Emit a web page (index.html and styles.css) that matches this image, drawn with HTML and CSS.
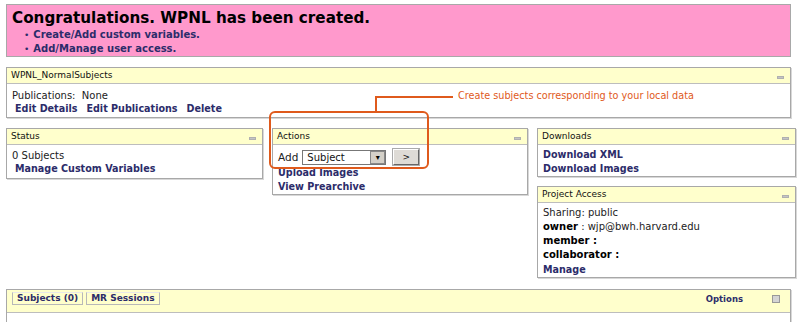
FILE: index.html
```html
<!DOCTYPE html>
<html lang="en">
<head>
  <meta charset="UTF-8">
  <title>WPNL</title>
  <link rel="stylesheet" href="styles.css">
</head>
<body>
  <div class="page">
    <div class="banner">
      <h1>Congratulations. WPNL has been created.</h1>
      <ul>
        <li><a href="#">Create/Add custom variables.</a></li>
        <li><a href="#">Add/Manage user access.</a></li>
      </ul>
    </div>

    <div class="box project">
      <div class="box-head">WPNL_NormalSubjects <span class="min"></span></div>
      <div class="box-body">
        <div class="pubs">Publications:&nbsp; None</div>
        <div class="links">
          <a href="#">Edit Details</a>
          <a href="#">Edit Publications</a>
          <a href="#">Delete</a>
        </div>
      </div>
    </div>

    <div class="row">
      <div class="col">
        <div class="box status">
          <div class="box-head">Status <span class="min"></span></div>
          <div class="box-body">
            <div>0 Subjects</div>
            <a class="link" href="#">Manage Custom Variables</a>
          </div>
        </div>
      </div>

      <div class="col">
        <div class="box actions">
          <div class="box-head">Actions <span class="min"></span></div>
          <div class="box-body">
            <div class="add-row">
              <span>Add</span>
              <span class="select">Subject<span class="arrow">&#9662;</span></span>
              <span class="go">&gt;</span>
            </div>
            <a class="link" href="#">Upload Images</a>
            <a class="link" href="#">View Prearchive</a>
          </div>
        </div>
      </div>

      <div class="col">
        <div class="box downloads">
          <div class="box-head">Downloads <span class="min"></span></div>
          <div class="box-body">
            <a class="link" href="#">Download XML</a>
            <a class="link" href="#">Download Images</a>
          </div>
        </div>
        <div class="box access">
          <div class="box-head">Project Access <span class="min"></span></div>
          <div class="box-body">
            <div>Sharing: public</div>
            <div><b>owner</b> : wjp@bwh.harvard.edu</div>
            <div><b>member :</b></div>
            <div><b>collaborator :</b></div>
            <a class="link manage" href="#">Manage</a>
          </div>
        </div>
      </div>
    </div>

    <div class="box data">
      <div class="data-head">
        <span class="tab">Subjects (0)</span>
        <span class="tab">MR Sessions</span>
        <span class="spacer"></span>
        <span class="options">Options</span>
        <span class="check"></span>
      </div>
      <div class="data-body"></div>
    </div>

    <div class="callout">
      <div class="callout-box"></div>
      <div class="callout-line"></div>
      <div class="callout-text">Create subjects corresponding to your local data</div>
    </div>
  </div>
</body>
</html>
```

FILE: styles.css
```css
* {
  box-sizing: border-box;
}

body {
  margin: 0;
  background: #fff;
  font-family: "DejaVu Sans", Verdana, sans-serif;
  font-size: 10px;
  color: #222;
}

a {
  color: #2c2c6a;
  font-weight: bold;
  font-size: 9.6px;
  text-decoration: none;
}

.page {
  position: relative;
  padding: 4px 9px 0 6px;
}

.banner {
  background: #ff99cc;
  border: 1px solid #a8a8a8;
  padding: 3px 5px 0;
  height: 53px;
}

.banner h1 {
  margin: 0;
  font-size: 15.2px;
  line-height: 20px;
  color: #000;
}

.banner ul {
  margin: 0;
  padding-left: 12px;
  list-style: none;
}

.banner li {
  line-height: 13px;
}

.banner li::before {
  content: "\2022";
  color: #2c2c6a;
  font-size: 9px;
  margin-right: 4px;
}

.banner a {
  font-size: 10px;
}

.box {
  background: #fff;
  border: 1px solid #a8a8a8;
  box-shadow: 1px 1px 0 #d8d8d8;
}

.box-head {
  background: #ffffcc;
  border-bottom: 1px solid #bdbdbd;
  height: 16px;
  padding: 0 6px 0 4px;
  font-size: 9px;
  line-height: 15px;
  color: #111;
  display: flex;
  justify-content: space-between;
  align-items: center;
}

.min {
  width: 7px;
  height: 3px;
  background: #c4c4c4;
  border: 1px solid #b0b0b0;
  margin-top: 3px;
}

.box-body {
  padding: 4px 5px 3px;
  line-height: 13px;
}

.link {
  display: block;
}

.project {
  margin-top: 10px;
}

.project .box-body {
  padding: 5px 5px 2px;
}

.links {
  display: flex;
  gap: 9px;
  padding-left: 3px;
}

.row {
  display: grid;
  grid-template-columns: 257px 256px 259px;
  column-gap: 9px;
  align-items: start;
  margin-top: 10px;
  margin-right: -6px;
}

.col {
  display: flex;
  flex-direction: column;
  gap: 9px;
}

.status .link {
  padding-left: 3px;
}

.actions .box-body {
  padding: 4px 5px 0;
  line-height: 14px;
}

.add-row {
  display: flex;
  align-items: center;
  gap: 4px;
  height: 16px;
  margin-bottom: 1px;
  font-size: 10.5px;
}

.select {
  width: 84px;
  height: 15px;
  border: 1px solid #777;
  background: #fff;
  padding-left: 4px;
  font-size: 10px;
  line-height: 13px;
  display: flex;
  justify-content: space-between;
  color: #111;
}

.arrow {
  width: 15px;
  height: 13px;
  background: #d4d0c8;
  border: 1px solid #888;
  font-size: 8px;
  line-height: 11px;
  text-align: center;
  color: #000;
}

.go {
  width: 26px;
  height: 16px;
  margin-left: 3px;
  background: #dedbd6;
  border: 1px solid #fff;
  border-right-color: #666;
  border-bottom-color: #666;
  box-shadow: 0 0 0 1px #aaa;
  font-size: 9px;
  line-height: 14px;
  text-align: center;
  color: #111;
}

.downloads .box-body {
  padding: 3px 5px 0;
  line-height: 14px;
}

.access .box-body {
  line-height: 14px;
  padding: 3px 5px 0;
}

.access b {
  color: #000;
}

.manage {
  margin-top: 1px;
}

.data {
  margin-top: 11px;
}

.data-head {
  background: #ffffcc;
  border-bottom: 1px solid #bdbdbd;
  height: 23px;
  padding: 2px 10px 0 5px;
  display: flex;
  align-items: flex-start;
  gap: 3px;
}

.tab {
  border: 1px solid #b8b8b8;
  border-top-color: #e8e8e8;
  background: #ffffcc;
  padding: 0 4px;
  font-size: 9px;
  font-weight: bold;
  line-height: 11px;
  color: #2c2c6a;
}

.spacer {
  flex: 1;
}

.options {
  font-size: 8.5px;
  font-weight: bold;
  color: #2c2c6a;
  line-height: 14px;
  margin-right: 26px;
}

.check {
  width: 8px;
  height: 8px;
  border: 1px solid #999;
  background: #d4d4d4;
  margin-top: 3px;
}

.data-body {
  height: 20px;
}

.callout {
  position: absolute;
  left: 0;
  top: 0;
  width: 0;
  height: 0;
}

.callout-box {
  position: absolute;
  left: 269px;
  top: 111px;
  width: 160px;
  height: 58px;
  border: 2px solid #df5a1c;
  border-radius: 6px;
}

.callout-line {
  position: absolute;
  left: 375px;
  top: 96px;
  width: 78px;
  height: 16px;
  border-left: 2px solid #df5a1c;
  border-top: 2px solid #df5a1c;
}

.callout-text {
  position: absolute;
  left: 458px;
  top: 90px;
  white-space: nowrap;
  font-size: 9.7px;
  color: #df5a1c;
}
```
